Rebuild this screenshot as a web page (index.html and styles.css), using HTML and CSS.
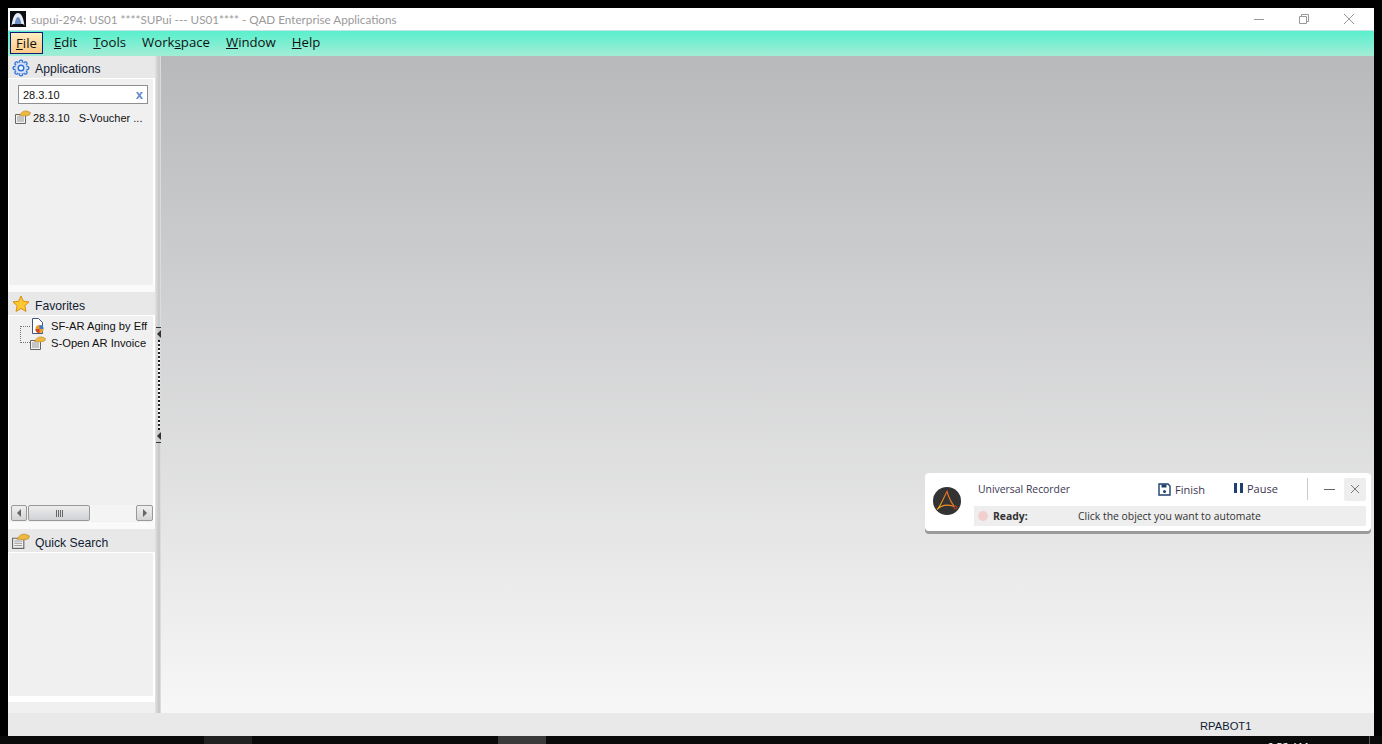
FILE: index.html
```html
<!DOCTYPE html>
<html lang="en">
<head>
<meta charset="utf-8">
<title>QAD Enterprise Applications</title>
<link rel="stylesheet" href="styles.css">
</head>
<body>
<div class="window">
  <header class="titlebar">
    <svg class="app-icon" width="16" height="16" viewBox="0 0 16 16"><rect width="16" height="16" fill="#0a0d14"/><path d="M1.500 16C2 8 4.500 2 8 2s6 6 6.500 14z" fill="#e8edf5"/><path d="M4.500 14C5 9 6.500 6 8 6s3 3 3.500 8z" fill="#6f8fc4"/><path d="M0 16l3-3h10l3 3z" fill="#0a0d14"/></svg>
    <span class="title-text">supui-294: US01 ****SUPui --- US01**** - QAD Enterprise Applications</span>
    <div class="win-controls">
      <svg width="12" height="12" viewBox="0 0 12 12"><path d="M1 6.500h10" stroke="#999" fill="none"/></svg>
      <svg width="12" height="12" viewBox="0 0 12 12"><path d="M1.500 3.500h7v7h-7zM3.500 3.500v-2h7v7h-2" stroke="#999" fill="none"/></svg>
      <svg width="12" height="12" viewBox="0 0 12 12"><path d="M1 1l10 10M11 1L1 11" stroke="#999" fill="none"/></svg>
    </div>
  </header>
  <nav class="menubar">
    <span class="menu-item active"><u>F</u>ile</span>
    <span class="menu-item"><u>E</u>dit</span>
    <span class="menu-item"><u>T</u>ools</span>
    <span class="menu-item">Work<u>s</u>pace</span>
    <span class="menu-item"><u>W</u>indow</span>
    <span class="menu-item"><u>H</u>elp</span>
  </nav>
  <div class="workarea">
    <aside class="sidebar">
      <section class="panel panel-apps">
        <h2 class="panel-head">
          <svg width="18" height="18" viewBox="0 0 18 18"><g fill="#d5e4fa" stroke="#2f6fd0" stroke-width="1.300"><circle cx="9" cy="2.800" r="1.700"/><circle cx="9" cy="15.200" r="1.700"/><circle cx="2.800" cy="9" r="1.700"/><circle cx="15.200" cy="9" r="1.700"/><circle cx="4.600" cy="4.600" r="1.700"/><circle cx="13.400" cy="4.600" r="1.700"/><circle cx="4.600" cy="13.400" r="1.700"/><circle cx="13.400" cy="13.400" r="1.700"/></g><circle cx="9" cy="9" r="5.800" fill="#d5e4fa"/><circle cx="9" cy="9" r="2.800" fill="#f4f8fe" stroke="#2f6fd0" stroke-width="1.400"/></svg>
          Applications
        </h2>
        <div class="panel-body">
          <div class="search"><span>28.3.10</span><b class="clear">x</b></div>
          <div class="result">
            <svg class="doc-icon" width="16" height="14" viewBox="0 0 16 14"><path d="M.500 4.500h10v9H.500z" fill="#f2f2f2" stroke="#666"/><path d="M2 7h7M2 9h7M2 11h7" stroke="#999"/><path d="M4.500 5.500C6 2 9 .500 12 1l3.500 1.500-1 2.500-4 1-3-.5z" fill="#efb83f" stroke="#b5831f" stroke-width=".6"/></svg>
            <span>28.3.10&nbsp;&nbsp;&nbsp;S-Voucher ...</span>
          </div>
        </div>
      </section>
      <section class="panel panel-fav">
        <h2 class="panel-head">
          <svg width="18" height="18" viewBox="0 0 18 18"><path d="M9 1l2.400 5.300 5.600.6-4.200 3.800 1.200 5.700L9 13.500l-5 2.900 1.200-5.700L1 6.900l5.600-.6z" fill="#fdc92f" stroke="#d98e12"/></svg>
          Favorites
        </h2>
        <div class="panel-body tree-body">
          <div class="tree">
            <div class="tree-row">
              <span class="branch branch-first"></span>
              <svg class="leaf" width="14" height="16" viewBox="0 0 14 16"><path d="M1.500.5h6l4 4v11h-10z" fill="#fff" stroke="#3f5580"/><circle cx="8.500" cy="11" r="4" fill="#e8a020"/><path d="M8.500 11V7a4 4 0 0 1 4 4z" fill="#3a78d8"/><path d="M8.500 11h-4a4 4 0 0 0 4 4z" fill="#d8402a"/></svg>
              <span>SF-AR Aging by Eff</span>
            </div>
            <div class="tree-row">
              <span class="branch"></span>
              <svg class="leaf" width="16" height="14" viewBox="0 0 16 14"><path d="M.500 4.500h10v9H.500z" fill="#f2f2f2" stroke="#666"/><path d="M2 7h7M2 9h7M2 11h7" stroke="#999"/><path d="M4.500 5.500C6 2 9 .500 12 1l3.500 1.500-1 2.500-4 1-3-.5z" fill="#efb83f" stroke="#b5831f" stroke-width=".6"/></svg>
              <span>S-Open AR Invoice</span>
            </div>
          </div>
          <div class="scrollbar">
            <span class="sb-btn"><i class="arrow-left"></i></span>
            <span class="sb-thumb"><i class="grip"></i></span>
            <span class="sb-track"></span>
            <span class="sb-btn"><i class="arrow-right"></i></span>
          </div>
        </div>
      </section>
      <section class="panel panel-quick">
        <h2 class="panel-head">
          <svg width="18" height="16" viewBox="0 0 16 14"><path d="M.500 4.500h10v9H.500z" fill="#f2f2f2" stroke="#666"/><path d="M2 7h7M2 9h7M2 11h7" stroke="#999"/><path d="M4.500 5.500C6 2 9 .500 12 1l3.500 1.500-1 2.500-4 1-3-.5z" fill="#efb83f" stroke="#b5831f" stroke-width=".6"/></svg>
          Quick Search
        </h2>
        <div class="panel-body"></div>
      </section>
    </aside>
    <div class="splitter">
      <div class="grab">
        <i class="grab-tick"></i>
        <i class="arrow-left small"></i>
        <i class="grab-dots"></i>
        <i class="arrow-left small"></i>
        <i class="grab-tick"></i>
      </div>
    </div>
    <main class="mdi"></main>
  </div>
  <footer class="statusbar"><span>RPABOT1</span></footer>
  <div class="recorder">
    <div class="rec-logo">
      <svg width="28" height="28" viewBox="0 0 28 28"><defs><linearGradient id="rec-a" x1="0" y1="1" x2="1" y2="0"><stop offset="0" stop-color="#f6b21f"/><stop offset="1" stop-color="#e8591f"/></linearGradient></defs><circle cx="14" cy="14" r="14" fill="#333"/><path d="M4 22.500C7 20 10 12 14 4.500c1.500 5 4 11 7.500 15M4 22.500c4-4 9-6 17-3" fill="none" stroke="url(#rec-a)" stroke-width="1.100"/><circle cx="22.500" cy="20.500" r="1.400" fill="none" stroke="#d9431f"/></svg>
    </div>
    <div class="rec-main">
      <div class="rec-top">
        <span class="rec-name">Universal Recorder</span>
        <span class="rec-action rec-finish">
          <svg width="13" height="13" viewBox="0 0 13 13"><path d="M1 1h9l2 2v9H1z" fill="none" stroke="#1f3f6e" stroke-width="1.400"/><path d="M3.500 1.500h5v3h-5z" fill="#1f3f6e"/><circle cx="6.500" cy="8.500" r="1.500" fill="#1f3f6e"/></svg>
          Finish
        </span>
        <span class="rec-action rec-pause">
          <svg width="9" height="10" viewBox="0 0 9 10"><path d="M0 0h3v10H0zM6 0h3v10H6z" fill="#1f3f6e"/></svg>
          Pause
        </span>
        <span class="rec-divider"></span>
        <span class="rec-min"></span>
        <span class="rec-close"><svg width="10" height="10" viewBox="0 0 10 10"><path d="M1 1l8 8M9 1L1 9" stroke="#777" fill="none"/></svg></span>
      </div>
      <div class="rec-status">
        <i class="rec-dot"></i>
        <b class="rec-ready">Ready:</b>
        <span>Click the object you want to automate</span>
      </div>
    </div>
  </div>
</div>
<div class="taskbar">
  <span class="tile tile-a"></span>
  <span class="tile tile-b"></span>
  <span class="clock">6:52 AM</span>
  <span class="tray-line"></span>
</div>
</body>
</html>
```
FILE: styles.css
```css
* { box-sizing: border-box; }
html, body { margin: 0; height: 100%; }
body {
  width: 1382px;
  height: 744px;
  background: #000;
  overflow: hidden;
  padding-top: 8px;
  font-family: "Liberation Sans", Arial, sans-serif;
}
.window {
  position: relative;
  width: 1366px;
  height: 728px;
  margin-left: 8px;
  display: flex;
  flex-direction: column;
  background: #f0f0f0;
}
.titlebar {
  height: 23px;
  flex: none;
  display: flex;
  align-items: center;
  background: #fff;
  border-bottom: 1px solid #c8e4ea;
  padding-left: 2px;
}
.app-icon { flex: none; margin-top: -1px; }
.title-text {
  margin-left: 5px;
  font: 11.7px Lato, sans-serif;
  color: #9a9a9a;
}
.win-controls {
  margin-left: auto;
  display: flex;
  gap: 33px;
  padding-right: 19px;
}
.menubar {
  height: 25px;
  flex: none;
  display: flex;
  align-items: center;
  gap: 14px;
  padding: 0 0 2px 2px;
  background: linear-gradient(#59f0cd, #a2edd6);
  font: 13.2px "Open Sans", sans-serif;
  color: #111;
}
.menu-item { padding: 0 6px; line-height: 21px; border: 1px solid transparent; margin-left: -6px; margin-right: -6px; }
.menu-item.active {
  margin-left: 0;
  margin-right: -4px;
  padding: 0 5px;
  border: 1px solid #0a1e78;
  background: linear-gradient(#ffedc0, #fdca86);
  height: 22px;
}
.workarea { flex: 1; display: flex; min-height: 0; }
.sidebar {
  width: 147px;
  flex: none;
  display: flex;
  flex-direction: column;
  background: #f0f0f0;
}
.panel { display: flex; flex-direction: column; background: #fff; }
.panel-apps { height: 229px; }
.panel-fav { height: 237px; }
.panel-quick { height: 180px; }
.panel-head {
  height: 22px;
  flex: none;
  margin: 0;
  display: flex;
  align-items: center;
  gap: 5px;
  padding: 4px 0 0 4px;
  background: #e8e8e8;
  font: 12.2px "Liberation Sans", sans-serif;
  color: #111c33;
}
.panel-head svg { margin-top: -3px; }
.panel-fav .panel-head, .panel-quick .panel-head { height: 30px; border-top: 7px solid #fafafa; }
.panel-body {
  flex: 1;
  margin: 1px 2px 0 1px;
  background: #f0f0f0;
  position: relative;
  min-height: 0;
}
.panel-quick .panel-body { margin-bottom: 6px; }
.search {
  margin: 6px 5px 0 9px;
  height: 19px;
  background: #fff;
  border: 1px solid #8f8f8f;
  display: flex;
  align-items: center;
  justify-content: space-between;
  padding: 0 4px;
  font-size: 11px;
  color: #111;
}
.clear { color: #5f87d0; font: bold 13px "Liberation Sans", sans-serif; }
.result {
  display: flex;
  align-items: center;
  gap: 2px;
  margin: 5px 0 0 6px;
  height: 16px;
  font-size: 11px;
  color: #111;
  white-space: nowrap;
}
.result span { padding-top: 2px; }
.tree-body { display: flex; flex-direction: column; }
.tree { flex: 1; padding: 1px 0 0 11px; }
.tree-row {
  display: flex;
  align-items: center;
  height: 17px;
  font-size: 11.2px;
  color: #111;
  white-space: nowrap;
}
.branch {
  width: 10px;
  height: 9px;
  flex: none;
  margin-top: -9px;
  border-left: 1px dotted #777;
  border-bottom: 1px dotted #777;
}
.branch-first { margin-top: 9px; border-bottom: 0; border-top: 1px dotted #777; }
.leaf { flex: none; margin: 0 6px 0 1px; }
.tree-row:last-child .leaf { margin-left: 0; margin-right: 5px; }
.scrollbar {
  height: 16px;
  margin: 0 0 1px 2px;
  display: flex;
  gap: 1px;
  background: #f4f4f4;
  flex: none;
}
.sb-btn {
  width: 16px;
  flex: none;
  display: flex;
  align-items: center;
  justify-content: center;
  border: 1px solid #999;
  background: linear-gradient(#efefef, #d4d4d4);
  border-radius: 2px;
}
.sb-btn:last-child { width: 17px; }
.sb-thumb {
  width: 62px;
  flex: none;
  display: flex;
  align-items: center;
  justify-content: center;
  border: 1px solid #999;
  border-radius: 2px;
  background: linear-gradient(#ededed, #cfd1d4);
}
.sb-track { flex: 1; }
.grip { width: 7px; height: 7px; background: repeating-linear-gradient(90deg, #666 0 1px, transparent 1px 2px); }
.arrow-left, .arrow-right { width: 0; height: 0; border-top: 4px solid transparent; border-bottom: 4px solid transparent; }
.arrow-left { border-right: 4px solid #666; }
.arrow-right { border-left: 4px solid #666; }
.splitter {
  width: 6px;
  flex: none;
  position: relative;
  background: linear-gradient(90deg, #e2e2e2, #c5c5c5 70%, #e4e4e4);
}
.grab {
  position: absolute;
  top: 271px;
  left: 1px;
  height: 116px;
  width: 5px;
  display: flex;
  flex-direction: column;
  align-items: center;
}
.grab-tick { width: 5px; height: 1px; background: #333; flex: none; }
.arrow-left.small { margin: 2px 0; flex: none; border-right-color: #333; }
.grab-dots { flex: 1; width: 2px; background: repeating-linear-gradient(#222 0 2px, #fff 2px 4px); }
.mdi { flex: 1; background: linear-gradient(#b8b9bb, #f7f7f7); }
.statusbar {
  height: 23px;
  flex: none;
  display: flex;
  align-items: center;
  padding: 2px 0 0 1192px;
  background: #e9e9e9;
  font-size: 11.2px;
  color: #111c33;
}
.recorder {
  position: absolute;
  left: 917px;
  top: 465px;
  width: 446px;
  height: 58px;
  background: #fff;
  border-radius: 4px;
  box-shadow: 0 3px 0 #9a9a9a;
  display: flex;
  align-items: flex-start;
  padding: 5px 5px 0 8px;
  font: 10.4px "Open Sans", sans-serif;
  color: #333;
}
.rec-logo { width: 41px; flex: none; display: flex; margin-top: 9px; }
.rec-main { flex: 1; display: flex; flex-direction: column; }
.rec-top { height: 28px; display: flex; align-items: center; padding: 0 0 6px 4px; }
.rec-name { width: 180px; color: #3a3550; }
.rec-action { display: flex; align-items: center; gap: 4px; color: #3a3550; font-size: 11px; }
.rec-finish { width: 76px; }
.rec-pause { width: 73px; margin-top: -2px; }
.rec-divider { width: 1px; height: 22px; background: #ccc; flex: none; }
.rec-min { width: 11px; height: 1px; background: #666; margin-left: 16px; flex: none; }
.rec-close {
  width: 22px;
  height: 23px;
  margin-left: 9px;
  background: #eee;
  border-radius: 2px;
  display: flex;
  align-items: center;
  justify-content: center;
}
.rec-status {
  height: 20px;
  background: #eee;
  display: flex;
  align-items: center;
  padding-left: 4px;
  color: #333;
}
.rec-dot { width: 10px; height: 10px; border-radius: 50%; background: #f0cfcc; flex: none; }
.rec-ready { width: 85px; margin-left: 5px; color: #333; }
.taskbar {
  position: relative;
  height: 8px;
  background: #0a0a0a;
  overflow: hidden;
}
.tile { position: absolute; top: 0; height: 8px; width: 48px; }
.tile-a { left: 204px; background: #212121; }
.tile-b { left: 498px; background: #3a3a3a; }
.clock { position: absolute; left: 1267px; top: 3px; font: 11px "Open Sans", sans-serif; color: #fff; }
.tray-line { position: absolute; left: 1369px; top: 0; width: 1px; height: 8px; background: #555; }
```
